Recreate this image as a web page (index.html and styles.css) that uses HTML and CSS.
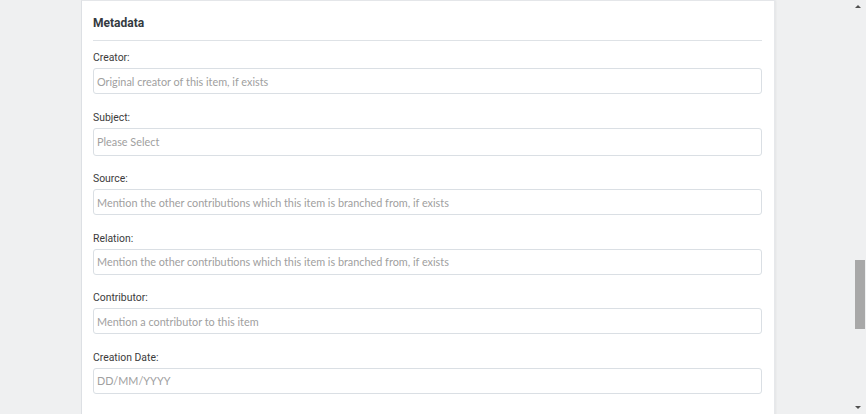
FILE: index.html
```html
<!DOCTYPE html>
<html lang="en">
<head>
<meta charset="utf-8">
<title>Metadata</title>
<link rel="stylesheet" href="styles.css">
</head>
<body>
<div class="page">
  <main class="card">
    <h2 class="section-title">Metadata</h2>
    <div class="field">
      <label class="label" for="creator">Creator:</label>
      <input class="input" id="creator" type="text" placeholder="Original creator of this item, if exists">
    </div>
    <div class="field">
      <label class="label" for="subject">Subject:</label>
      <select class="input select" id="subject"><option>Please Select</option></select>
    </div>
    <div class="field">
      <label class="label" for="source">Source:</label>
      <input class="input" id="source" type="text" placeholder="Mention the other contributions which this item is branched from, if exists">
    </div>
    <div class="field">
      <label class="label" for="relation">Relation:</label>
      <input class="input" id="relation" type="text" placeholder="Mention the other contributions which this item is branched from, if exists">
    </div>
    <div class="field">
      <label class="label" for="contributor">Contributor:</label>
      <input class="input" id="contributor" type="text" placeholder="Mention a contributor to this item">
    </div>
    <div class="field">
      <label class="label" for="cdate">Creation Date:</label>
      <input class="input" id="cdate" type="text" placeholder="DD/MM/YYYY">
    </div>
  </main>
</div>
<div class="scrollbar">
  <span class="arrow arrow-up"></span>
  <span class="thumb"></span>
  <span class="arrow arrow-down"></span>
</div>
</body>
</html>
```

FILE: styles.css
```css
html, body {
  margin: 0;
  padding: 0;
  height: 100%;
  overflow: hidden;
}
body {
  background: #eff0f1;
  font-family: Roboto, "Liberation Sans", sans-serif;
}
.page {
  display: flex;
  padding-left: 81px;
  height: 100%;
}
.card {
  width: 669px;
  background: #fff;
  border-top: 1px solid #e4e6e9;
  border-left: 1px solid #dde0e4;
  border-right: 1px solid #e6e8eb;
  box-shadow: 1px 0 2px rgba(0, 0, 0, 0.05);
  padding: 14px 12px 0 11px;
  min-height: 100%;
}
.section-title {
  margin: 0;
  font-size: 12px;
  line-height: 16px;
  font-weight: 700;
  color: #343a40;
  padding-bottom: 9px;
  border-bottom: 1px solid #dee2e6;
  margin-bottom: 8px;
}
.field {
  display: flex;
  flex-direction: column;
  margin-bottom: 14.6px;
}
.label {
  font-size: 10.4px;
  line-height: 17px;
  color: #3b3b3b;
  margin-bottom: 2px;
}
.input {
  box-sizing: border-box;
  height: 26px;
  width: 100%;
  margin: 0;
  border: 1px solid #dadfe4;
  border-radius: 3px;
  padding: 0 3px;
  font-family: Lato, sans-serif;
  font-size: 10.85px;
  color: #555;
  background: #fff;
  outline: none;
}
.input::placeholder {
  color: #a0a0a0;
}
.select {
  height: 28px;
  appearance: none;
  -webkit-appearance: none;
  color: #a0a0a0;
}
.scrollbar {
  position: fixed;
  top: 0;
  right: 0;
  width: 15px;
  height: 100%;
  background: #eff0f1;
}
.arrow {
  position: absolute;
  left: 4px;
  width: 0;
  height: 0;
  border-left: 3px solid transparent;
  border-right: 3px solid transparent;
}
.arrow-up {
  top: 5px;
  border-bottom: 3px solid #505050;
}
.arrow-down {
  bottom: 5px;
  border-top: 3px solid #505050;
}
.thumb {
  position: absolute;
  top: 260px;
  left: 4px;
  width: 10px;
  height: 69px;
  background: #a8a8a8;
}
```
